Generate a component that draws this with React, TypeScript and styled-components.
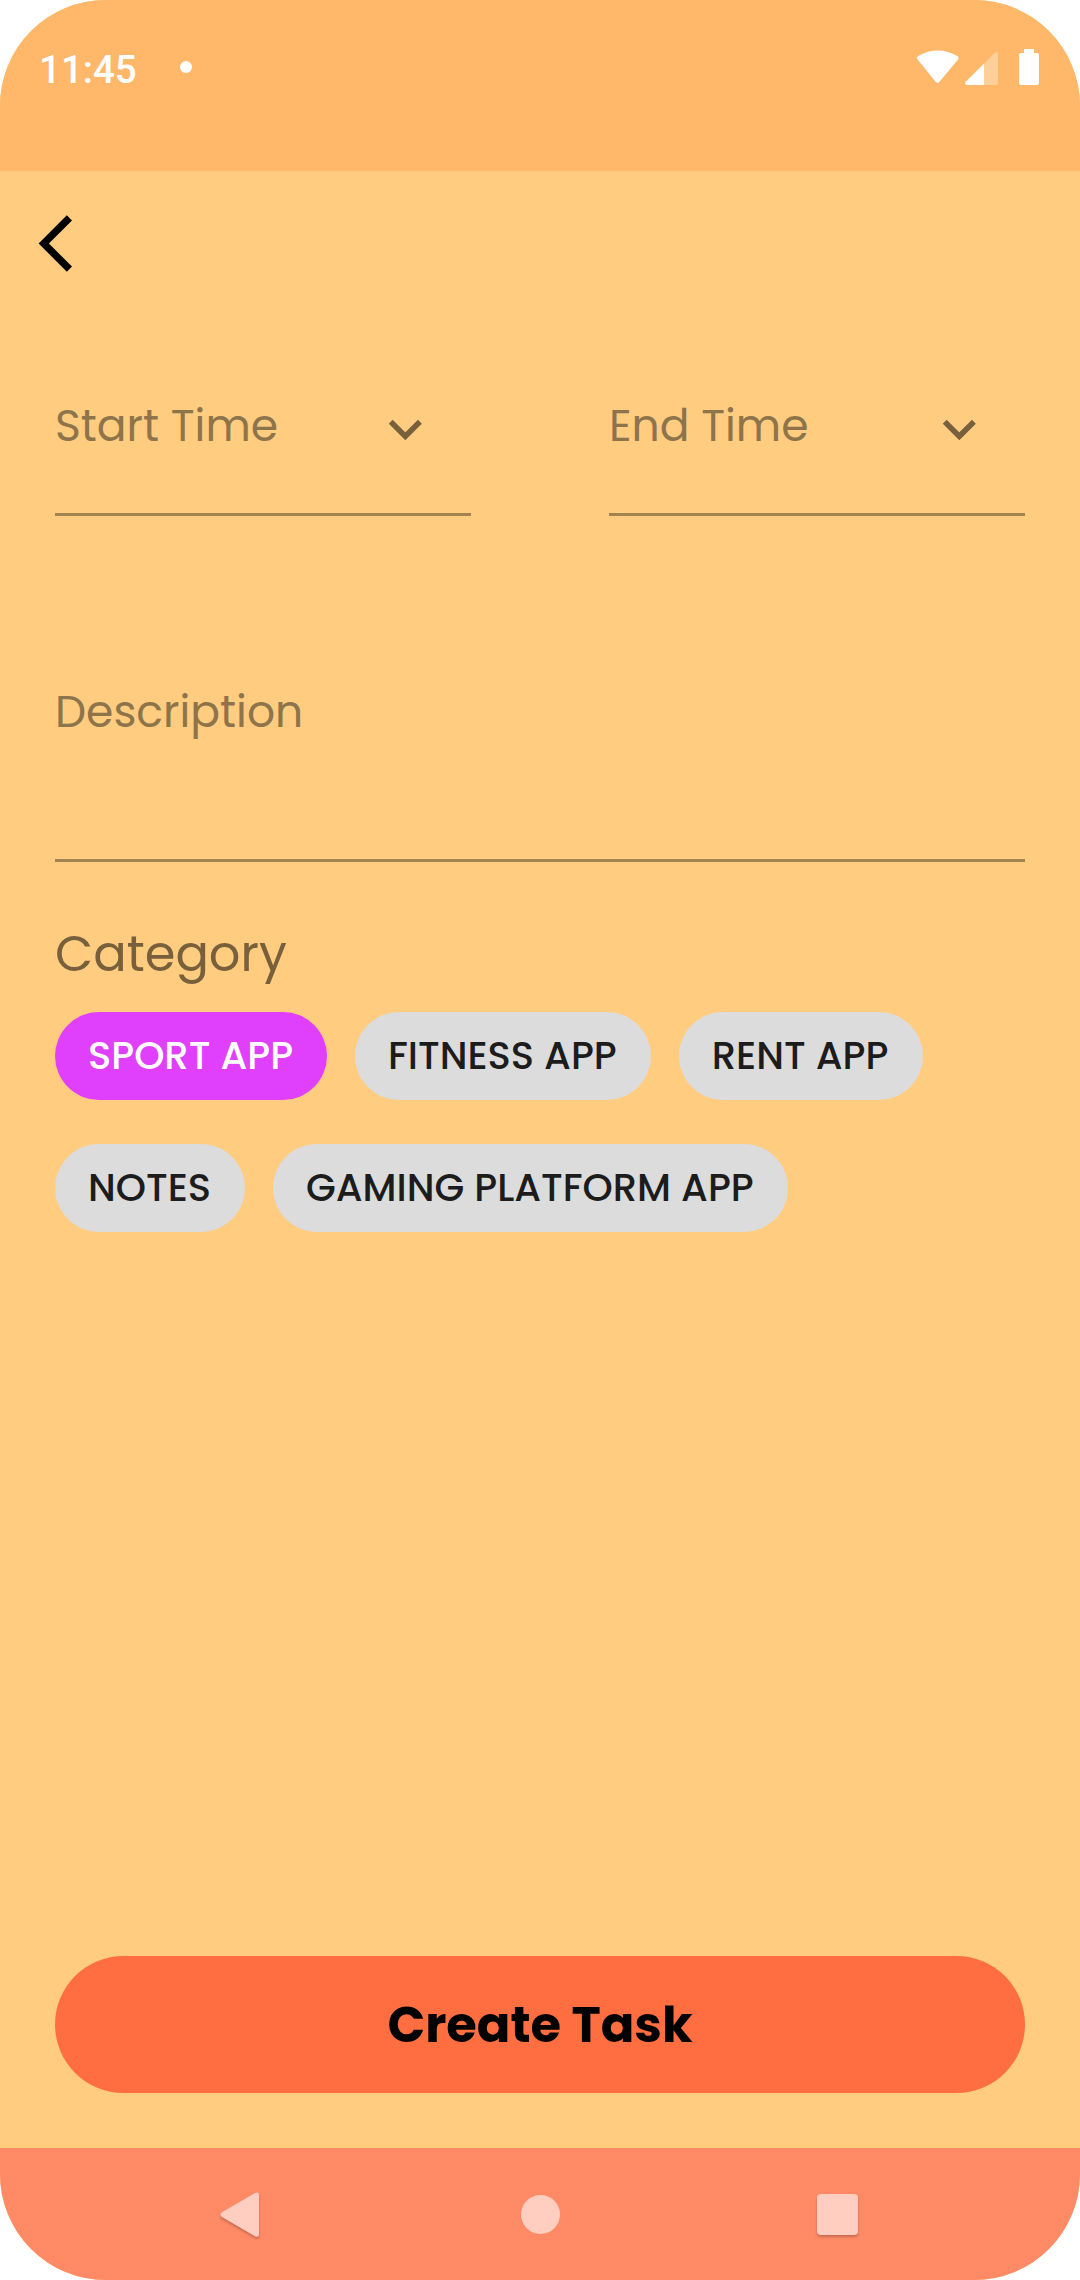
import React from "react";
import styled, { createGlobalStyle } from "styled-components";

const Global = createGlobalStyle`
  * { box-sizing: border-box; }
  body { margin: 0; background: #fff; }
`;

const Screen = styled.div`
  width: 1080px;
  height: 2280px;
  display: flex;
  flex-direction: column;
  background: #ffcc80;
  border-radius: 106px;
  overflow: hidden;
  font-family: Poppins, Inter, "Open Sans", sans-serif;
`;

const StatusBar = styled.header`
  height: 171px;
  flex: none;
  display: flex;
  align-items: flex-start;
  padding: 46px 41px 0 39px;
  background: #ffb869;
`;

const Clock = styled.span`
  width: 141px;
  margin-top: 1px;
  font: 500 38.5px/46px Roboto, sans-serif;
  color: #fff;
`;

const Notice = styled.span`
  width: 12px;
  height: 12px;
  margin-top: 15px;
  border-radius: 50%;
  background: #fff;
`;

const StatusIcons = styled.svg`
  width: 124px;
  height: 40px;
  margin-left: auto;
`;

const Toolbar = styled.div`
  height: 144px;
  flex: none;
  padding: 44px 38px 0;
`;

const BackButton = styled.button`
  display: block;
  padding: 0;
  border: 0;
  background: none;
  svg { display: block; }
`;

const Form = styled.main`
  flex: 1;
  display: flex;
  flex-direction: column;
  padding: 0 55px 55px;
`;

const TimeRow = styled.div`
  display: flex;
  justify-content: space-between;
  margin-top: 70px;
`;

const Field = styled.label<{ $w: string; $h: number; $top?: number }>`
  width: ${(p) => p.$w};
  height: ${(p) => p.$h}px;
  display: flex;
  justify-content: space-between;
  border-bottom: 3px solid #a48352;
  padding-top: ${(p) => p.$top ?? 0}px;
  padding-right: 48px;
`;

const FieldText = styled.span`
  font-size: 44px;
  line-height: 66px;
  color: #8e744a;
  white-space: nowrap;
`;

const Chevron = styled.svg`
  width: 36px;
  height: 24px;
  margin-top: 25px;
`;

const Description = styled.div`
  margin-top: 163px;
`;

const Heading = styled.h2`
  margin: 56px 0 0;
  height: 94px;
  font-size: 49.5px;
  line-height: 72px;
  font-weight: 400;
  color: #78603c;
`;

const Chips = styled.div`
  display: flex;
  flex-wrap: wrap;
  gap: 44px 27.5px;
`;

const Chip = styled.button<{ $on?: boolean }>`
  height: 88px;
  padding: 0 34.4px 0 33px;
  border: 0;
  border-radius: 44px;
  font: inherit;
  font-weight: 500;
  font-size: 38.5px;
  line-height: 88px;
  white-space: nowrap;
  background: ${(p) => (p.$on ? "#e040fb" : "#dcdcdc")};
  color: ${(p) => (p.$on ? "#fff" : "#1c1c1c")};
`;

const Submit = styled.button`
  height: 137.5px;
  margin-top: auto;
  padding: 2px 0 0;
  border: 0;
  border-radius: 69px;
  background: #ff6e40;
  color: #000;
  font: inherit;
  font-size: 49.5px;
  font-weight: 700;
`;

const NavBar = styled.nav`
  height: 132px;
  flex: none;
  display: flex;
  align-items: center;
  justify-content: space-between;
  padding: 0 216px 0 214px;
  background: #ff8a65;
`;

const NavIcon = styled.svg<{ $raised?: boolean }>`
  width: 52px;
  height: 52px;
  overflow: visible;
  filter: ${(p) => (p.$raised ? "drop-shadow(0 2px 1px rgba(0, 0, 0, 0.22))" : "none")};
`;

const Down = () => (
  <Chevron viewBox="0 0 36 24">
    <path d="M3.7 3.7 L18.3 18.3 L32.9 3.7" fill="none" stroke="#78603c" strokeWidth="5.5" />
  </Chevron>
);

const chips = [
  { name: "SPORT APP", on: true },
  { name: "FITNESS APP" },
  { name: "RENT APP" },
  { name: "NOTES" },
  { name: "GAMING PLATFORM APP" },
];

export default function App() {
  return (
    <Screen>
      <Global />
      <StatusBar>
        <Clock>11:45</Clock>
        <Notice />
        <StatusIcons viewBox="915 46 124 40">
          <path fill="#fff" d="M917.6 59.6 Q916 57.7 918 56.3 Q927 50.4 937.5 50.4 Q948 50.4 957.7 56.3 Q959.6 57.7 958 59.6 L939.3 82 Q937.6 83.9 935.8 82 Z" />
          <path fill="#fff" fillOpacity=".33" d="M984 64 L994.5 53 Q998 50.5 998 54 V83 Q998 85 996 85 H984 Z" />
          <path fill="#fff" d="M984 63.5 V85 H967 Q964 84.5 965.5 82 Z" />
          <path fill="#fff" d="M1024 49 H1034 V53 H1037 Q1039 53 1039 55 V83 Q1039 85 1037 85 H1021 Q1019 85 1019 83 V55 Q1019 53 1021 53 H1024 Z" />
        </StatusIcons>
      </StatusBar>
      <Toolbar>
        <BackButton aria-label="Back">
          <svg width="36" height="58" viewBox="38 215 36 58">
            <path d="M69.4 217.8 L43.8 243.5 L69.4 269.2" fill="none" stroke="#000" strokeWidth="7.3" />
          </svg>
        </BackButton>
      </Toolbar>
      <Form>
        <TimeRow>
          <Field $w="416px" $h={131} $top={8}>
            <FieldText>Start Time</FieldText>
            <Down />
          </Field>
          <Field $w="416px" $h={131} $top={8}>
            <FieldText>End Time</FieldText>
            <Down />
          </Field>
        </TimeRow>
        <Description>
          <Field $w="100%" $h={183}>
            <FieldText>Description</FieldText>
          </Field>
        </Description>
        <Heading>Category</Heading>
        <Chips>
          {chips.map((c) => (
            <Chip key={c.name} $on={c.on}>
              {c.name}
            </Chip>
          ))}
        </Chips>
        <Submit>Create Task</Submit>
      </Form>
      <NavBar>
        <NavIcon viewBox="214 2188 52 52" $raised>
          <path fill="#ffcec0" d="M221.5 2212.5 L255 2193 Q259 2191.5 259 2195 V2234 Q259 2238 255 2236.2 L221.5 2216.8 Q219.5 2214.6 221.5 2212.5 Z" />
        </NavIcon>
        <NavIcon viewBox="513 2188 52 52">
          <circle cx="540.5" cy="2214.5" r="19.5" fill="#ffcec0" />
        </NavIcon>
        <NavIcon viewBox="812 2188 52 52" $raised>
          <rect x="817" y="2194" width="41" height="41" rx="4" fill="#ffcec0" />
        </NavIcon>
      </NavBar>
    </Screen>
  );
}
